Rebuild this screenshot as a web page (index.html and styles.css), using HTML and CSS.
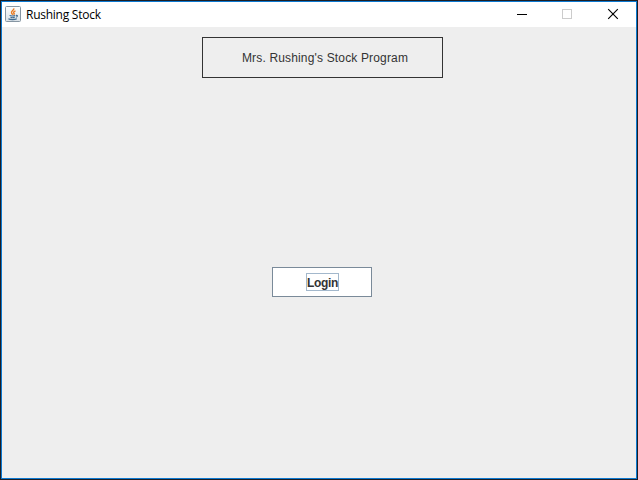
FILE: index.html
```
<!DOCTYPE html>
<html lang="en">
<head>
<meta charset="utf-8">
<title>Rushing Stock</title>
<link rel="stylesheet" href="styles.css">
</head>
<body>
<div class="window">
  <header class="titlebar">
    <svg class="app-icon" width="16" height="16" viewBox="0 0 16 16">
      <defs><linearGradient id="tile" x1="0" y1="0" x2="0" y2="1"><stop offset="0" stop-color="#fff"/><stop offset="1" stop-color="#d9e0e6"/></linearGradient></defs>
      <rect x=".5" y=".5" width="15" height="15" rx="1" fill="url(#tile)" stroke="#8796a3"/>
      <path d="M8.8 2.3C9.3 4.3 5.5 5 6.6 7.2L7.8 8.7M10.5 4.8C8.6 5.6 8 6.5 9.2 7.7L8.8 8.8" fill="none" stroke="#e87a22" stroke-width="1.4"/>
      <path d="M4.6 9.4C5.6 10.2 9 10.1 10.3 9.5M5.5 11.4Q7.5 12 9.7 11.4M3.4 12.8C5.5 14 9.8 13.8 11.8 12.8M11 9.4C13.2 9 12.7 10.8 10.9 11.2" fill="none" stroke="#416b90" stroke-width="1.1"/>
    </svg>
    <span class="title">Rushing Stock</span>
    <div class="controls">
      <svg class="control" width="46" height="25" viewBox="0 0 46 25" shape-rendering="crispEdges"><path d="M19 12.5h10" stroke="#000"/></svg>
      <svg class="control" width="46" height="25" viewBox="0 0 46 25" shape-rendering="crispEdges"><rect x="18.5" y="7.5" width="9" height="9" fill="none" stroke="#ccc"/></svg>
      <svg class="control" width="46" height="25" viewBox="0 0 46 25"><path d="M18.2 7.2l9.6 9.6m0-9.6l-9.6 9.6" stroke="#000" stroke-width="1.15"/></svg>
    </div>
  </header>
  <main class="content">
    <h1 class="banner"><span>Mrs. Rushing's Stock Program</span></h1>
    <button class="login"><span class="focus"><span>Login</span></span></button>
  </main>
</div>
</body>
</html>
```
FILE: styles.css
```
* { box-sizing: border-box; }
body { margin: 0; background: #1d1e24; }
.window {
  display: flex;
  flex-direction: column;
  width: 638px;
  height: 480px;
  border: 1px solid #1d1e24;
  background: #eee;
  box-shadow: inset 0 0 0 1px #0b78d0;
  padding: 1px;
}
.titlebar {
  display: flex;
  align-items: center;
  height: 25px;
  padding-left: 3px;
  background: #fff;
}
.app-icon { margin-bottom: 1px; }
.title {
  margin-left: 5px;
  font: 12px/16px "Open Sans", sans-serif;
  letter-spacing: -0.25px;
  color: #000;
  white-space: nowrap;
}
.controls { display: flex; margin-left: auto; }
.control { display: block; }
.content {
  display: flex;
  flex: 1;
  flex-direction: column;
  align-items: flex-start;
  padding: 10px 0 0 200px;
}
.banner {
  display: flex;
  align-items: center;
  justify-content: center;
  width: 241px;
  height: 41px;
  margin: 0;
  border: 1px solid #333;
  padding-left: 5px;
  font: 12px/16px "Liberation Sans", Arial, sans-serif;
  letter-spacing: 0.16px;
  color: #333;
  white-space: nowrap;
}
.login {
  display: flex;
  align-items: center;
  justify-content: center;
  width: 100px;
  height: 30px;
  margin: 189px 0 0 70px;
  border: 1px solid #7a8a99;
  padding: 0 0 0 1px;
  background: #fff;
}
.focus {
  display: flex;
  justify-content: center;
  width: 33px;
  height: 18px;
  border: 1px solid #a3b8cc;
  padding-top: 1px;
  font: bold 12px/16px "Liberation Sans", Arial, sans-serif;
  letter-spacing: -0.3px;
  color: #333;
}
```
